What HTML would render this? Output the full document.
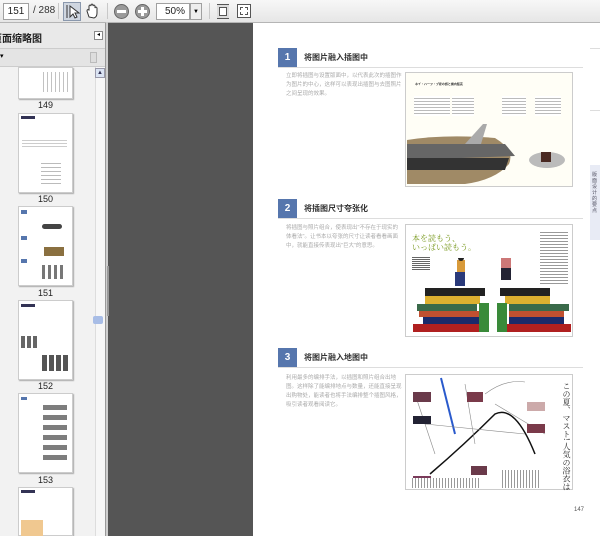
<!DOCTYPE html>
<html><head><meta charset="utf-8">
<style>
*{margin:0;padding:0;box-sizing:border-box}
html,body{width:600px;height:536px;overflow:hidden}
body{position:relative;background:#555;font-family:"Liberation Sans","Noto Sans CJK SC",sans-serif}
.a{position:absolute}
.tb{left:0;top:0;width:600px;height:23px;background:linear-gradient(#f7f7f7,#e6e6e6);border-bottom:1px solid #b5b5b5}
.inp{background:#fff;border:1px solid #a0a0a0;font-size:10px;color:#222;text-align:center;line-height:15px;height:17px}
.sep{width:1px;height:16px;background:#c8c8c8;top:3px}
.side{left:0;top:23px;width:106px;height:513px;background:#f2f2f2;border-right:1px solid #999}
.th{background:#fff;border:1px solid #ccc;box-shadow:1px 1px 1px #aaa;left:18px;width:55px;height:80px;overflow:hidden}
.lbl{font-size:9px;color:#222;width:55px;left:18px;text-align:center}
.pg{left:253px;top:23px;width:347px;height:513px;background:#fff}
.num{width:19px;height:19px;background:#5676ad;color:#fff;font-size:10px;font-weight:bold;text-align:center;line-height:19px}
.hd{font-size:8px;font-weight:bold;color:#333}
.ln{height:1px;background:#ddd;width:305px;left:278px}
.tx{font-size:5.5px;color:#aaa;line-height:9px;width:116px;left:286px}
.img{border:1px solid #ccc;background:#fff}
.g{background:#8a8a8a}
</style></head><body>
<div class="a tb"></div>
<div class="a inp" style="left:3px;top:3px;width:26px">151</div>
<div class="a" style="left:33px;top:5px;font-size:10px;color:#333">/ 288</div>
<div class="a sep" style="left:58px"></div>
<div class="a" style="left:63px;top:2px;width:18px;height:19px;background:#cfd6e0;border:1px solid #8a98ad"></div>
<svg class="a" style="left:65px;top:4px" width="15" height="15"><path d="M2 1v13M5 2l0 11 3-3 2 4 2-1-2-4 4 0z" stroke="#333" fill="#fff" stroke-width="1"/></svg>
<svg class="a" style="left:85px;top:3px" width="16" height="16"><path d="M4 14 L2 8 Q2 6 4 7 V3 Q5 1 6 3 V2 Q7 0 8 2 V3 Q9 1 10 3 V5 Q11 3 12 5 V10 Q12 14 9 15Z" fill="#fff" stroke="#333"/></svg>
<div class="a sep" style="left:107px"></div>
<div class="a" style="left:114px;top:4px;width:15px;height:15px;border-radius:50%;background:#9a9a9a;border:1px solid #666"></div>
<div class="a" style="left:117px;top:10px;width:9px;height:3px;background:#fff"></div>
<div class="a" style="left:135px;top:4px;width:15px;height:15px;border-radius:50%;background:#9a9a9a;border:1px solid #666"></div>
<div class="a" style="left:138px;top:10px;width:9px;height:3px;background:#fff"></div>
<div class="a" style="left:141px;top:7px;width:3px;height:9px;background:#fff"></div>
<div class="a inp" style="left:156px;top:3px;width:34px;text-align:right;padding-right:4px">50%</div>
<div class="a" style="left:190px;top:3px;width:12px;height:17px;border:1px solid #a0a0a0;background:#eee;font-size:6px;text-align:center;line-height:16px">▼</div>
<div class="a sep" style="left:209px"></div>
<div class="a" style="left:217px;top:4px;width:12px;height:15px;border:1px solid #555;border-left:none;border-right:none;background:#ddd"></div>
<div class="a" style="left:219px;top:7px;width:8px;height:9px;background:#fff;border:1px solid #555"></div>
<div class="a" style="left:237px;top:4px;width:14px;height:14px;border:1px solid #555;background:#fff"></div>
<div class="a" style="left:240px;top:7px;width:8px;height:8px;border:1px dashed #555"></div>

<div class="a side"></div>
<div class="a" style="left:0;top:23px;width:105px;height:26px;background:#e9e9e9;border-bottom:1px solid #ccc"></div>
<div class="a" style="left:-8px;top:30px;font-size:10px;font-weight:bold;color:#222">页面缩略图</div>
<div class="a" style="left:94px;top:31px;width:9px;height:9px;border:1px solid #888;background:#fff;font-size:6px;line-height:7px;text-align:center">◂</div>
<div class="a" style="left:0;top:49px;width:105px;height:18px;background:#e4e4e4;border-bottom:1px solid #ccc"></div>
<div class="a" style="left:0;top:52px;font-size:7px">▾</div>
<div class="a" style="left:90px;top:52px;width:7px;height:11px;background:#ddd;border:1px solid #bbb"></div>
<div class="a" style="left:95px;top:67px;width:10px;height:469px;background:#f7f7f7;border-left:1px solid #ddd"></div>
<div class="a" style="left:95px;top:68px;width:10px;height:10px;background:#dbe4f3;border:1px solid #99a;font-size:6px;text-align:center;line-height:8px;color:#335">▲</div>
<div class="a" style="left:106px;top:22px;width:2px;height:514px;background:#cfcfcf"></div>
<div class="a" style="left:107px;top:266px;width:2px;height:50px;background:#999"></div>
<div class="a" style="left:93px;top:316px;width:10px;height:8px;background:#a8bde6;border-radius:2px"></div>

<div class="a th" style="top:67px;height:32px"></div>
<div class="a" style="left:40px;top:72px;width:28px;height:20px;background:repeating-linear-gradient(90deg,#fff 0 3px,#999 3px 4px);opacity:.6"></div>
<div class="a lbl" style="top:100px">149</div>
<div class="a th" style="top:113px"></div><div class="a lbl" style="top:194px">150</div>
<div class="a th" style="top:206px"></div><div class="a lbl" style="top:288px">151</div>
<div class="a th" style="top:300px"></div><div class="a lbl" style="top:381px">152</div>
<div class="a th" style="top:393px"></div><div class="a lbl" style="top:475px">153</div>
<div class="a th" style="top:487px;height:49px"></div>
<div class="a" style="left:21px;top:116px;width:14px;height:3px;background:#335"></div>
<div class="a" style="left:22px;top:138px;width:45px;height:10px;background:repeating-linear-gradient(#fff 0 2px,#ccc 2px 3px)"></div>
<div class="a" style="left:41px;top:160px;width:20px;height:25px;background:repeating-linear-gradient(#fff 0 3px,#bbb 3px 4px)"></div>
<div class="a" style="left:21px;top:210px;width:6px;height:4px;background:#5676ad"></div>
<div class="a" style="left:21px;top:236px;width:6px;height:4px;background:#5676ad"></div>
<div class="a" style="left:21px;top:259px;width:6px;height:4px;background:#5676ad"></div>
<div class="a" style="left:42px;top:224px;width:20px;height:5px;background:#444;border-radius:3px"></div>
<div class="a" style="left:44px;top:247px;width:20px;height:9px;background:#8a7040"></div>
<div class="a" style="left:42px;top:265px;width:24px;height:14px;background:repeating-linear-gradient(90deg,#777 0 3px,#fff 3px 6px)"></div>
<div class="a" style="left:21px;top:304px;width:14px;height:3px;background:#335"></div>
<div class="a" style="left:21px;top:336px;width:18px;height:12px;background:repeating-linear-gradient(90deg,#666 0 4px,#fff 4px 6px)"></div>
<div class="a" style="left:42px;top:355px;width:26px;height:16px;background:repeating-linear-gradient(90deg,#555 0 5px,#fff 5px 7px)"></div>
<div class="a" style="left:21px;top:397px;width:6px;height:3px;background:#5676ad"></div>
<div class="a" style="left:43px;top:405px;width:24px;height:55px;background:repeating-linear-gradient(#666 0 5px,#fff 5px 10px);opacity:.85"></div>
<div class="a" style="left:21px;top:490px;width:14px;height:3px;background:#335"></div>
<div class="a" style="left:21px;top:520px;width:22px;height:16px;background:#f0c890"></div>

<div class="a pg"></div>
<div class="a" style="left:590px;top:165px;width:10px;height:75px;background:#e8ebf5"></div>
<div class="a" style="left:592px;top:172px;font-size:5px;color:#556;width:6px;line-height:6px">版面设计的要点</div>
<div class="a" style="left:590px;top:48px;width:10px;height:1px;background:#ddd"></div>
<div class="a" style="left:590px;top:110px;width:10px;height:1px;background:#ddd"></div>

<div class="a num" style="left:278px;top:48px">1</div>
<div class="a hd" style="left:304px;top:52px">将图片融入插图中</div>
<div class="a ln" style="top:67px"></div>
<div class="a tx" style="top:72px">立即将插图与设置版面中，以代表此次的插图作为图片的中心，这样可以表现出插图与去图照片之间呈现的效果。</div>
<div class="a img" style="left:405px;top:72px;width:168px;height:115px;background:#fffef6"></div>
<div class="a" style="left:415px;top:82px;font-size:3px;color:#333;font-weight:bold">ネイ・ハーフ・ブ夏の旅と機内販売</div>
<div class="a" style="left:414px;top:96px;width:36px;height:20px;background:repeating-linear-gradient(#fff 0 2px,#bbb 2px 3px)"></div>
<div class="a" style="left:452px;top:96px;width:22px;height:20px;background:repeating-linear-gradient(#fff 0 2px,#bbb 2px 3px)"></div>
<div class="a" style="left:502px;top:96px;width:24px;height:20px;background:repeating-linear-gradient(#fff 0 2px,#bbb 2px 3px)"></div>
<div class="a" style="left:535px;top:96px;width:26px;height:20px;background:repeating-linear-gradient(#fff 0 2px,#bbb 2px 3px)"></div>
<svg class="a" style="left:405px;top:120px" width="168" height="67">
<path d="M2 20 Q40 14 90 18 Q110 30 104 44 Q90 60 60 64 L2 64Z" fill="#a08a66"/>
<path d="M2 24 L100 24 L110 36 L2 40Z" fill="#666"/>
<path d="M60 24 L78 4 L82 4 L76 24Z" fill="#aaa"/>
<path d="M2 38 L104 38 L100 50 L2 50Z" fill="#333"/>
<ellipse cx="142" cy="40" rx="18" ry="8" fill="#bbb"/>
<rect x="136" y="32" width="10" height="10" fill="#4a2a22"/>
</svg>

<div class="a num" style="left:278px;top:199px">2</div>
<div class="a hd" style="left:304px;top:203px">将插图尺寸夸张化</div>
<div class="a ln" style="top:218px"></div>
<div class="a tx" style="top:224px">将插图与照片组合，使表现出"不存在于现实的体看法"。让书本以夸张的尺寸让读者看看画面中，就能直接传表现出"巨大"的意思。</div>
<div class="a img" style="left:405px;top:224px;width:168px;height:113px"></div>
<div class="a" style="left:412px;top:234px;font-size:8px;color:#7a9a20;line-height:9px;font-family:'Noto Serif CJK SC',serif">本を読もう、<br>いっぱい読もう。</div>
<div class="a" style="left:412px;top:256px;width:18px;height:14px;background:repeating-linear-gradient(#fff 0 1px,#666 1px 2px)"></div>
<div class="a" style="left:540px;top:230px;width:28px;height:55px;background:repeating-linear-gradient(#fff 0 2px,#999 2px 3px)"></div>
<svg class="a" style="left:405px;top:258px" width="168" height="80">
<rect x="52" y="2" width="8" height="12" fill="#d89a3a"/><rect x="50" y="14" width="10" height="14" fill="#2a3a7a"/><circle cx="56" cy="0" r="3" fill="#222"/>
<rect x="96" y="-6" width="10" height="16" fill="#c77"/><rect x="96" y="10" width="10" height="12" fill="#223"/>
<rect x="20" y="30" width="60" height="8" fill="#222"/>
<rect x="20" y="38" width="55" height="8" fill="#ddb030"/>
<rect x="12" y="46" width="60" height="7" fill="#3a6a4a"/>
<rect x="14" y="53" width="60" height="6" fill="#c05030"/>
<rect x="18" y="59" width="60" height="7" fill="#1a2a6a"/>
<rect x="8" y="66" width="66" height="8" fill="#b02020"/>
<rect x="74" y="45" width="10" height="29" fill="#3a8a3a"/>
<rect x="95" y="30" width="50" height="8" fill="#222"/>
<rect x="100" y="38" width="45" height="8" fill="#ddb030"/>
<rect x="104" y="46" width="60" height="7" fill="#3a6a4a"/>
<rect x="104" y="53" width="55" height="6" fill="#c05030"/>
<rect x="104" y="59" width="55" height="7" fill="#1a2a6a"/>
<rect x="100" y="66" width="66" height="8" fill="#b02020"/>
<rect x="92" y="45" width="10" height="29" fill="#3a8a3a"/>
</svg>

<div class="a num" style="left:278px;top:348px">3</div>
<div class="a hd" style="left:304px;top:352px">将图片融入地图中</div>
<div class="a ln" style="top:367px"></div>
<div class="a tx" style="top:374px">利用最多的编排手法，以插图和照片组合出地图。这样除了能编排地点与数量，还能直接呈现出购物处，能读者也将手法编排整个插图风格，吸引读者观看阅读它。</div>
<div class="a img" style="left:405px;top:374px;width:168px;height:116px"></div>
<svg class="a" style="left:405px;top:374px" width="168" height="116">
<path d="M36 4 L50 60" stroke="#2a5acc" stroke-width="2" fill="none"/>
<path d="M25 100 Q60 70 90 40 Q110 30 130 80" stroke="#111" stroke-width="1.5" fill="none"/>
<path d="M10 20 L30 80 M60 10 L70 70 M80 20 Q100 5 120 8 M90 30 L140 60 M20 50 L120 60" stroke="#888" stroke-width="0.6" fill="none"/>
<rect x="8" y="18" width="18" height="10" fill="#6a3a4a"/><rect x="8" y="42" width="18" height="8" fill="#223"/>
<rect x="8" y="102" width="18" height="12" fill="#7a3a5a"/><rect x="62" y="18" width="16" height="10" fill="#7a3a4a"/>
<rect x="122" y="50" width="18" height="9" fill="#7a3a4a"/><rect x="122" y="28" width="18" height="9" fill="#caa"/>
<rect x="66" y="92" width="16" height="9" fill="#6a3a4a"/><rect x="118" y="96" width="16" height="9" fill="#5a3a3a"/>
</svg>
<div class="a" style="left:410px;top:478px;width:70px;height:10px;background:repeating-linear-gradient(90deg,#fff 0 2px,#999 2px 3px)"></div>
<div class="a" style="left:500px;top:470px;width:40px;height:18px;background:repeating-linear-gradient(90deg,#fff 0 2px,#999 2px 3px)"></div>
<div class="a" style="left:550px;top:382px;width:20px;font-size:8px;line-height:8px;color:#222;writing-mode:vertical-rl;font-family:'Noto Serif CJK JP',serif">この夏、マスト! 人気の浴衣は</div>
<div class="a" style="left:574px;top:507px;font-size:6px;color:#555">147</div>
</body></html>
